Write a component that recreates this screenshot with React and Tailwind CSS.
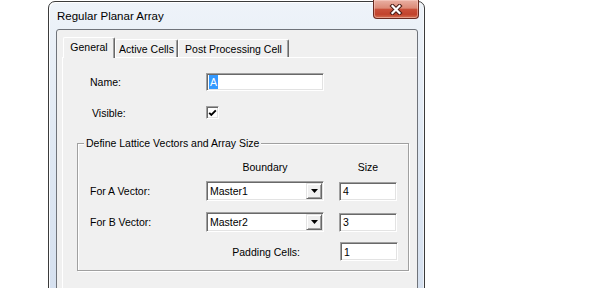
import React from 'react';

const sunken =
  'border border-t-[#a0a0a0] border-l-[#a0a0a0] border-b-white border-r-white shadow-[inset_1px_1px_0_#696969,inset_-1px_-1px_0_#e3e3e3] bg-white';

const TextBox = ({ children, className = '' }) => (
  <div className={`${sunken} flex items-center pl-[3px] ${className}`}>{children}</div>
);

const Combo = ({ value }) => (
  <div className={`${sunken} w-[118px] h-[20px] flex items-center justify-between pl-[3px] pr-[1px]`}>
    <span>{value}</span>
    <div className="w-[16px] h-[16px] flex items-center justify-center bg-[#f0f0f0] border border-t-[#e3e3e3] border-l-[#e3e3e3] border-b-[#696969] border-r-[#696969] shadow-[inset_1px_1px_0_#fff,inset_-1px_-1px_0_#a0a0a0]">
      <svg width="7" height="4" viewBox="0 0 7 4">
        <path d="M0 0h7L3.5 4z" fill="#000" />
      </svg>
    </div>
  </div>
);

const CloseButton = () => (
  <div className="absolute right-[5px] top-[-2px] w-[46px] h-[19px] flex items-center justify-center rounded-b-[4px] border border-t-0 border-[#6a2a20] bg-[linear-gradient(to_bottom,#e9b0a3_0%,#dc8a77_45%,#c9503a_52%,#c2432c_80%,#d27052_100%)] shadow-[inset_0_0_0_1px_rgba(255,220,210,0.45)]">
    <svg width="14" height="11" viewBox="0 0 14 11">
      <path d="M3.5 2L10.5 9M10.5 2L3.5 9" stroke="#4b1d16" strokeWidth="4.2" strokeLinecap="square" />
      <path d="M3.5 2L10.5 9M10.5 2L3.5 9" stroke="#fff" strokeWidth="2.2" strokeLinecap="square" />
    </svg>
  </div>
);

const tabBase =
  'flex items-center justify-center border-l border-t border-r border-l-white border-t-white border-r-[#696969] shadow-[inset_-1px_0_0_#a0a0a0] rounded-t-[2px] bg-[#f0f0f0]';

export default function App() {
  return (
    <div className="w-[600px] h-[288px] overflow-hidden bg-white font-['Liberation_Sans',Arial,sans-serif] text-[10.5px] leading-[12px] text-black">
      <div className="relative ml-[48px] mt-[1px] w-[377px] h-[300px] flex flex-col rounded-t-[7px] border border-[#3b3b3b] bg-gradient-to-b from-[#eef3f9] via-[#dfe8f3] to-[#d5e0ef] shadow-[inset_1px_1px_0_rgba(255,255,255,0.9),inset_-1px_0_0_rgba(255,255,255,0.6)]">
        {/* title bar */}
        <div className="h-[27px] shrink-0 flex items-center pl-[8px] text-[11.5px]">Regular Planar Array</div>
        <CloseButton />

        {/* client area */}
        <div className="flex-1 ml-[7px] mr-[6px] flex flex-col rounded-t-[3px] border border-[#6f737a] bg-[#f0f0f0] pl-[5px] pt-[7px]">
          {/* tabs */}
          <div className="flex items-end h-[20px] pl-[1px]">
            <div className={`${tabBase} relative z-10 w-[52px] h-[21px] -mb-[1px] pb-[2px]`}>General</div>
            <div className={`${tabBase} w-[63px] h-[18px]`}>Active Cells</div>
            <div className={`${tabBase} w-[111px] h-[18px]`}>Post Processing Cell</div>
          </div>

          {/* tab panel */}
          <div className="flex-1 flex flex-col border-t border-l border-white">
            <div className="flex items-center h-[18px] mt-[15px] pl-[27px]">
              <span className="w-[116px]">Name:</span>
              <TextBox className="w-[118px] h-[18px] !pl-[2px]">
                <span className="inline-block bg-[#3399ff] text-white px-[1px] leading-[14px]">A</span>
              </TextBox>
            </div>

            <div className="flex items-center h-[13px] mt-[15px] pl-[29px]">
              <span className="w-[114px]">Visible:</span>
              <div className={`${sunken} w-[13px] h-[13px] flex items-center justify-center`}>
                <svg width="9" height="8" viewBox="0 0 9 8">
                  <path d="M1.2 3.8L3.3 5.9L7.8 1.4" stroke="#000" strokeWidth="1.9" fill="none" />
                </svg>
              </div>
            </div>

            {/* group box */}
            <div className="ml-[14px] mt-[24px] w-[332px] h-[128px] flex flex-col border border-[#a0a0a0] shadow-[inset_1px_1px_0_#fff,1px_1px_0_#fff]">
              <div className="-mt-[7px] ml-[6px] px-[2px] w-fit bg-[#f0f0f0]">Define Lattice Vectors and Array Size</div>

              <div className="flex items-center h-[12px] mt-[12px] pl-[128px]">
                <span className="w-[118px] text-center">Boundary</span>
                <span className="w-[58px] ml-[15px] text-center">Size</span>
              </div>

              <div className="flex items-center h-[20px] mt-[8px] pl-[12px]">
                <span className="w-[116px]">For A Vector:</span>
                <Combo value="Master1" />
                <TextBox className="w-[58px] h-[19px] ml-[15px]">4</TextBox>
              </div>

              <div className="flex items-center h-[20px] mt-[11px] pl-[12px]">
                <span className="w-[116px]">For B Vector:</span>
                <Combo value="Master2" />
                <TextBox className="w-[58px] h-[19px] ml-[15px]">3</TextBox>
              </div>

              <div className="flex items-center h-[19px] mt-[10px] pl-[128px]">
                <span className="w-[94px] text-right">Padding Cells:</span>
                <TextBox className="w-[58px] h-[19px] ml-[40px]">1</TextBox>
              </div>
            </div>
          </div>
        </div>
      </div>
    </div>
  );
}
